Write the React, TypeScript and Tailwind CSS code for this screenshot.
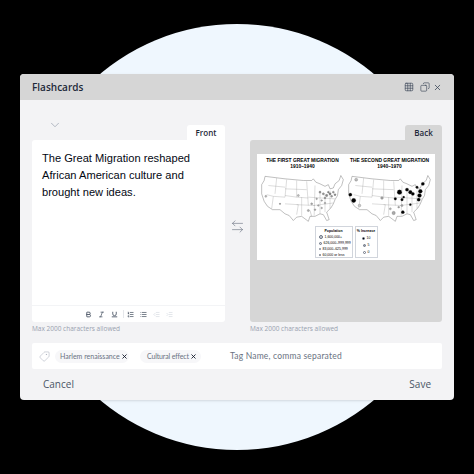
import { ArrowLeftRight, Bold, ChevronDown, Copy, Grid3x3, IndentDecrease, IndentIncrease, Italic, List, ListOrdered, Tag, Underline, X } from "lucide-react";

const US_OUTLINE =
  "M6 3 L30 6 L52 8 L62 8 L64 6 L67 10 L72 12 L78 15 L82 13 L84 18 L88 17 L90 12 L95 8 L97 2 L100 7 L98 14 L94 19 L93 26 L90 31 L88 36 L85 41 L80 46 L83 55 L80 56 L76 49 L72 48 L66 51 L60 51 L58 57 L54 54 L50 51 L44 52 L40 56 L35 50 L30 48 L24 43 L15 43 L9 39 L5 33 L2 24 L2 13 L5 8 Z";

const STATE_LINES =
  "M20 5 L18 24 M32 7 L30 28 L16 27 M44 8 L44 28 L30 26 M30 18 L56 19 M44 28 L58 29 M56 9 L58 38 M44 37 L66 38 M30 36 L46 37 L44 49 M16 27 L14 42 M66 14 L65 50 M72 22 L72 48 M78 24 L78 46 M58 28 L90 30 M64 38 L88 35 M10 14 L30 16 M8 25 L16 27 M50 28 L50 50 M84 20 L84 42";

type Dot = { x: number; y: number; r: number; fill: string };

function UsMap({ dots, label }: { dots: Dot[]; label?: boolean }) {
  return (
    <svg viewBox="0 0 102 58" className="h-[50px] w-[85px]">
      <path d={US_OUTLINE} fill="#fff" stroke="#666" strokeWidth="0.5" />
      <path d={STATE_LINES} fill="none" stroke="#999" strokeWidth="0.4" />
      {dots.map((d, i) => (
        <circle key={i} cx={d.x} cy={d.y} r={d.r} fill={d.fill} stroke="#555" strokeWidth="0.3" />
      ))}
      {label && <path d="M60 44 L62 51" stroke="#555" strokeWidth="0.3" />}
    </svg>
  );
}

const firstDots: Dot[] = [
  { x: 72, y: 22, r: 1.3, fill: "#999" }, { x: 76, y: 24, r: 1.3, fill: "#999" }, { x: 80, y: 26, r: 1.4, fill: "#888" },
  { x: 84, y: 24, r: 1.4, fill: "#888" }, { x: 88, y: 22, r: 1.2, fill: "#999" }, { x: 86, y: 27, r: 1.2, fill: "#999" },
  { x: 90, y: 25, r: 1.2, fill: "#888" }, { x: 82, y: 22, r: 1.1, fill: "#888" }, { x: 78, y: 29, r: 1.1, fill: "#999" },
  { x: 68, y: 30, r: 1, fill: "#aaa" }, { x: 74, y: 32, r: 1, fill: "#aaa" }, { x: 78, y: 35, r: 1, fill: "#aaa" },
  { x: 70, y: 38, r: 1, fill: "#aaa" }, { x: 62, y: 36, r: 1.2, fill: "#aaa" }, { x: 58, y: 44, r: 1.3, fill: "#aaa" },
  { x: 74, y: 41, r: 1, fill: "#aaa" }, { x: 66, y: 43, r: 1, fill: "#aaa" },
  { x: 46, y: 26, r: 1.2, fill: "#bbb" }, { x: 24, y: 36, r: 0.8, fill: "#555" }, { x: 7, y: 27, r: 1.2, fill: "#bbb" },
];

const secondDots: Dot[] = [
  { x: 63, y: 22, r: 2.8, fill: "#000" }, { x: 72, y: 19, r: 2, fill: "#000" }, { x: 76, y: 22, r: 2.2, fill: "#000" },
  { x: 79, y: 24, r: 2, fill: "#000" }, { x: 91, y: 12, r: 2, fill: "#000" }, { x: 88, y: 21, r: 2.4, fill: "#000" },
  { x: 87, y: 26, r: 2.4, fill: "#000" }, { x: 86, y: 31, r: 2, fill: "#000" }, { x: 84, y: 16, r: 1.5, fill: "#000" },
  { x: 68, y: 28, r: 1.3, fill: "#000" }, { x: 58, y: 30, r: 1.6, fill: "#000" }, { x: 66, y: 31, r: 1.6, fill: "#000" },
  { x: 67, y: 46, r: 1.9, fill: "#000" }, { x: 76, y: 37, r: 1.3, fill: "#000" },
  { x: 4, y: 25, r: 2, fill: "#000" }, { x: 8, y: 32, r: 2.6, fill: "#000" }, { x: 15, y: 38, r: 1.6, fill: "#ccc" },
  { x: 11, y: 7, r: 1.8, fill: "#bbb" }, { x: 42, y: 29, r: 1.6, fill: "#aaa" }, { x: 56, y: 47, r: 2, fill: "#aaa" },
  { x: 66, y: 38, r: 1.3, fill: "#aaa" }, { x: 62, y: 40, r: 1.1, fill: "#aaa" }, { x: 52, y: 42, r: 1.2, fill: "#bbb" },
];

function LegendDot({ size, fill }: { size: string; fill: string }) {
  return <span className={`block shrink-0 rounded-full border border-gray-500 ${size} ${fill}`} />;
}

function MigrationChart() {
  return (
    <div className="flex h-[106px] flex-col bg-white px-[3px] pt-[4px] font-['Liberation_Sans',sans-serif] text-black">
      <div className="flex justify-between whitespace-nowrap">
        <div className="w-[85px] text-center text-[4.9px] leading-[6px] font-bold">
          <p>THE FIRST GREAT MIGRATION</p>
          <p>1910–1940</p>
        </div>
        <div className="w-[85px] text-center text-[4.9px] leading-[6px] font-bold">
          <p>THE SECOND GREAT MIGRATION</p>
          <p>1940–1970</p>
        </div>
      </div>
      <div className="mt-[3px] flex justify-between">
        <UsMap dots={firstDots} label />
        <UsMap dots={secondDots} />
      </div>
      <div className="mt-[3px] flex justify-center gap-[2px]">
        <div className="h-[32px] w-[38px] border border-gray-300 px-[3px] pt-[1px] text-[3.5px] leading-[6px] whitespace-nowrap">
          <p className="text-center font-bold">Population</p>
          <p className="flex items-center gap-[2px]"><LegendDot size="h-[4px] w-[4px]" fill="bg-gray-300" />1,600,000+</p>
          <p className="flex items-center gap-[2px]"><LegendDot size="h-[3px] w-[3px]" fill="bg-gray-300" />626,000–999,999</p>
          <p className="flex items-center gap-[2px]"><LegendDot size="h-[2px] w-[2px]" fill="bg-gray-300" />83,000–625,999</p>
          <p className="flex items-center gap-[2px]"><LegendDot size="h-[1px] w-[1px]" fill="bg-gray-500" />60,000 or less</p>
        </div>
        <div className="flex h-[32px] w-[23px] flex-col items-center border border-gray-300 pt-[1px] text-[3.5px] leading-[7px] whitespace-nowrap">
          <p className="font-bold">% Increase</p>
          <p className="flex items-center gap-[2px]"><LegendDot size="h-[3px] w-[3px]" fill="bg-black" />10</p>
          <p className="flex items-center gap-[2px]"><LegendDot size="h-[3px] w-[3px]" fill="bg-gray-400" />5</p>
          <p className="flex items-center gap-[2px]"><LegendDot size="h-[3px] w-[3px]" fill="bg-white" />0</p>
        </div>
      </div>
    </div>
  );
}

function TagChip({ name, width }: { name: string; width: string }) {
  return (
    <span className={`flex h-[13px] items-center gap-[1px] rounded-full bg-[#f7f7f9] text-[7px] whitespace-nowrap text-gray-500 ${width}`}>
      {name}
      <X className="h-[7px] w-[7px] shrink-0 text-gray-900" strokeWidth={3} />
    </span>
  );
}

export default function App() {
  return (
    <div className="relative flex h-[474px] w-[474px] justify-center overflow-hidden bg-black pt-[74px] font-['Open_Sans',sans-serif]">
      <div className="absolute top-[24px] left-[24px] h-[426px] w-[426px] rounded-full bg-[#eff7fe]" />

      <div className="relative flex h-[326px] w-[434px] flex-col overflow-hidden rounded-[4px] bg-[#f3f3f5] shadow-sm">
        <header className="flex h-[26px] shrink-0 items-center justify-between bg-[#d6d6d6] px-[12px]">
          <h1 className="text-[10px] font-semibold text-gray-800">Flashcards</h1>
          <div className="flex items-center gap-[6px] text-gray-700">
            <Grid3x3 className="h-[10px] w-[10px]" strokeWidth={1.5} />
            <Copy className="h-[10px] w-[10px] -scale-x-100" strokeWidth={1.5} />
            <X className="-ml-[3px] h-[9px] w-[9px]" strokeWidth={2} />
          </div>
        </header>

        <div className="flex flex-1 flex-col px-[12px]">
          <ChevronDown className="mt-[18px] ml-[16px] h-[14px] w-[14px] text-gray-400" strokeWidth={1.25} />

          <div className="-mt-[7px] flex items-stretch justify-between">
            <div className="flex w-[193px] flex-col">
              <div className="flex h-[15px] w-[38px] items-center justify-center self-end rounded-t-[3px] bg-white text-[8px] font-semibold text-gray-800">
                Front
              </div>
              <div className="flex h-[182px] flex-col rounded-l-[3px] rounded-b-[3px] bg-white">
                <p className="flex-1 px-[10px] pt-[10px] font-['Liberation_Sans',sans-serif] text-[11.1px] leading-[17px] text-gray-950">
                  The Great Migration reshaped African American culture and brought new ideas.
                </p>
                <div className="flex h-[17px] items-center justify-center gap-[6px] border-t border-gray-100 text-gray-600">
                  <Bold className="h-[7px] w-[7px]" strokeWidth={3} />
                  <Italic className="h-[7px] w-[7px]" strokeWidth={2.5} />
                  <Underline className="h-[7px] w-[7px]" strokeWidth={3} />
                  <span className="-mr-[3px] -ml-[1px] h-[8px] w-px bg-gray-200" />
                  <ListOrdered className="h-[7px] w-[7px]" strokeWidth={2.5} />
                  <List className="h-[7px] w-[7px]" strokeWidth={2.5} />
                  <IndentDecrease className="h-[7px] w-[7px] text-gray-300" strokeWidth={2} />
                  <IndentIncrease className="h-[7px] w-[7px] text-gray-300" strokeWidth={2} />
                </div>
              </div>
              <p className="mt-[3px] text-[6.5px] leading-[8px] text-gray-400">Max 2000 characters allowed</p>
            </div>

            <div className="flex flex-1 items-center justify-center pb-[6px]">
              <ArrowLeftRight className="h-[15px] w-[15px] text-gray-500" strokeWidth={1} />
            </div>

            <div className="flex w-[192px] flex-col">
              <div className="flex h-[15px] w-[37px] items-center justify-center self-end rounded-t-[3px] bg-[#d6d6d6] text-[8px] font-semibold text-gray-800">
                Back
              </div>
              <div className="h-[182px] rounded-l-[3px] rounded-b-[3px] bg-[#d6d6d6] px-[7px] pt-[14px]">
                <MigrationChart />
              </div>
              <p className="mt-[3px] text-[6.5px] leading-[8px] text-gray-400">Max 2000 characters allowed</p>
            </div>
          </div>

          <div className="mt-[10px] flex h-[26px] items-center rounded-[2px] bg-white pl-[7px] font-['Lato',sans-serif]">
            <Tag className="h-[11px] w-[11px] shrink-0 -scale-x-100 text-gray-400" strokeWidth={1} />
            <div className="ml-[5px] flex items-center gap-[11px]">
              <TagChip name="Harlem renaissance" width="w-[74px] pl-[5px]" />
              <TagChip name="Cultural effect" width="w-[61px] pl-[7px] tracking-[-0.15px]" />
            </div>
            <span className="ml-[29px] text-[8.5px] tracking-[0.2px] whitespace-nowrap text-gray-500">Tag Name, comma separated</span>
          </div>

          <footer className="flex flex-1 items-center justify-between px-[11px] text-[10px] text-gray-600">
            <button>Cancel</button>
            <button>Save</button>
          </footer>
        </div>
      </div>
    </div>
  );
}
